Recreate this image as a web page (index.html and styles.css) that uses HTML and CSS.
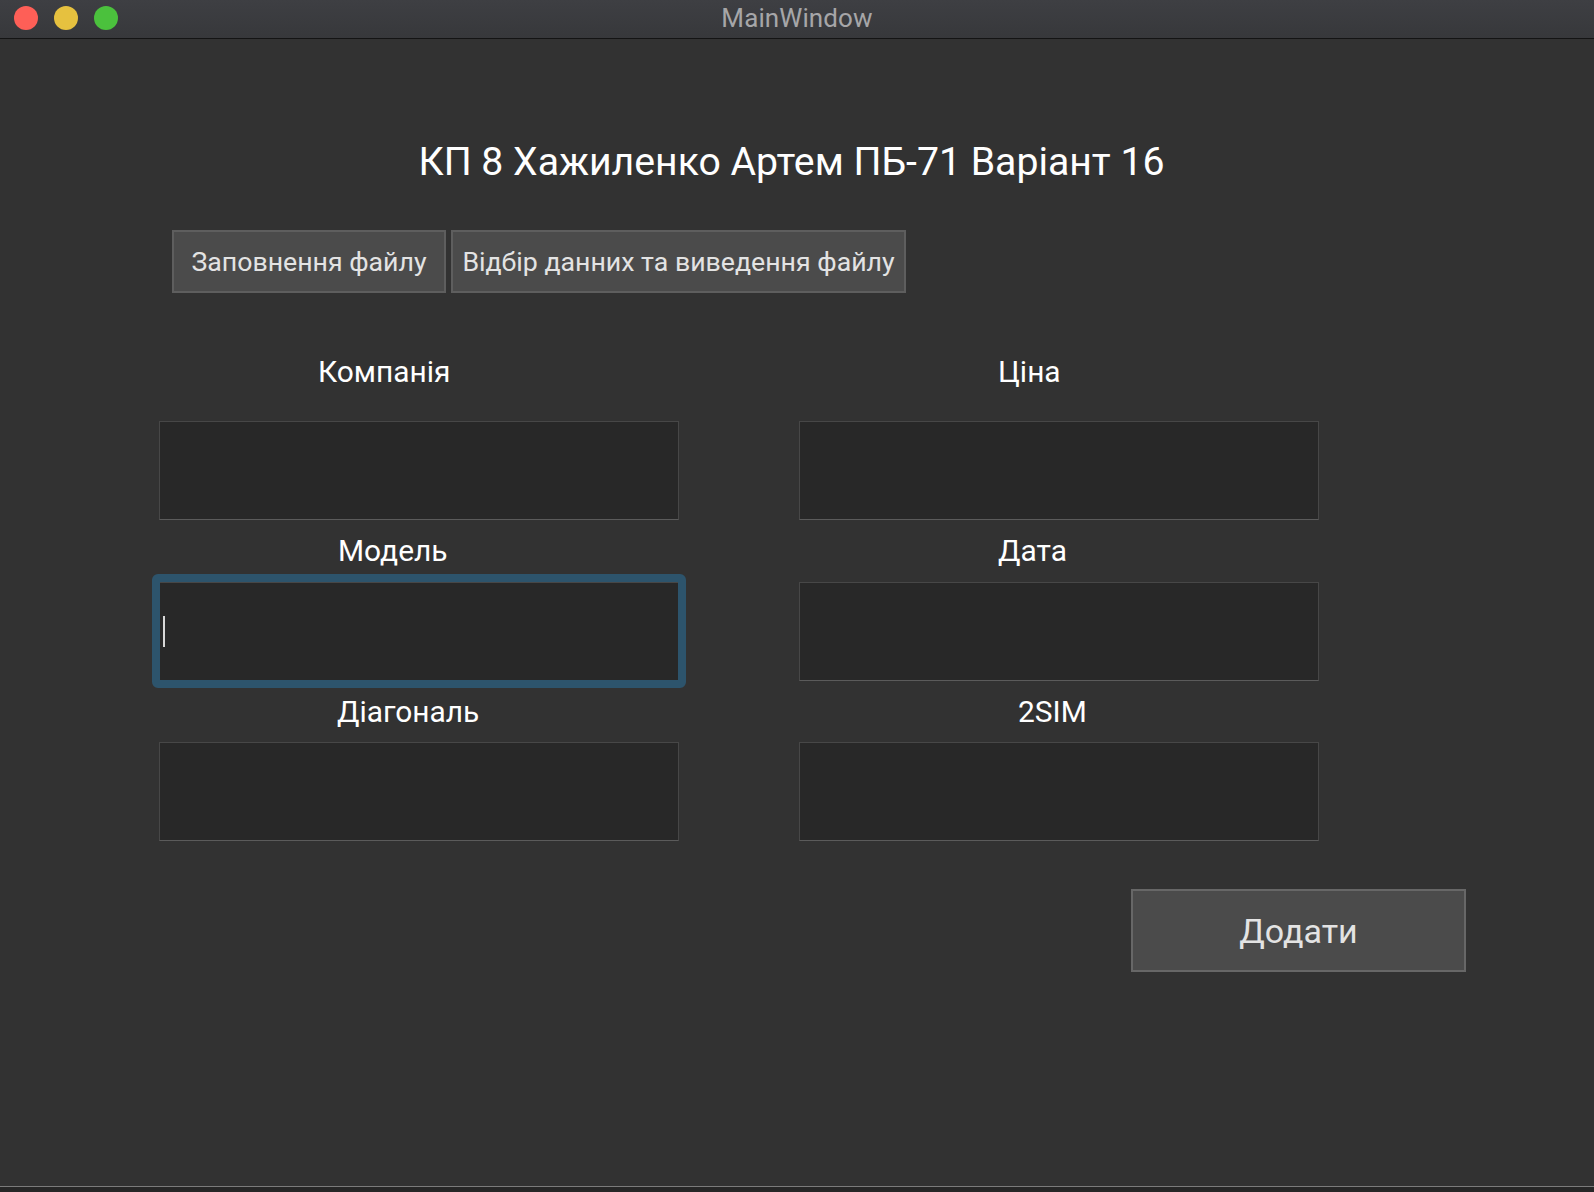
FILE: index.html
```html
<!DOCTYPE html>
<html lang="uk">
<head>
<meta charset="utf-8">
<title>MainWindow</title>
<link rel="stylesheet" href="styles.css">
</head>
<body>
<div class="window">
  <header class="titlebar">
    <div class="lights">
      <span class="light red"></span>
      <span class="light yellow"></span>
      <span class="light green"></span>
    </div>
    <div class="win-title">MainWindow</div>
    <div class="spacer"></div>
  </header>
  <main class="content">
    <h1 class="heading">КП 8 Хажиленко Артем ПБ-71 Варіант 16</h1>
    <div class="tabs">
      <button class="tab tab-fill">Заповнення файлу</button>
      <button class="tab tab-select">Відбір данних та виведення файлу</button>
    </div>
    <div class="form">
      <div class="col">
        <label class="lbl lbl-first lbl-company">Компанія</label>
        <div class="field"></div>
        <label class="lbl lbl-mid lbl-model">Модель</label>
        <div class="field focused"><span class="caret"></span></div>
        <label class="lbl lbl-last lbl-diag">Діагональ</label>
        <div class="field"></div>
      </div>
      <div class="col">
        <label class="lbl lbl-first lbl-price">Ціна</label>
        <div class="field"></div>
        <label class="lbl lbl-mid lbl-date">Дата</label>
        <div class="field"></div>
        <label class="lbl lbl-last lbl-sim">2SIM</label>
        <div class="field"></div>
      </div>
    </div>
    <div class="actions">
      <button class="add">Додати</button>
    </div>
  </main>
  <div class="bottom-edge"></div>
</div>
</body>
</html>
```

FILE: styles.css
```css
* { box-sizing: border-box; }

html, body {
  margin: 0;
  padding: 0;
  background: #323232;
}

body {
  font-family: Roboto, "Noto Sans", "Liberation Sans", sans-serif;
  color: #ffffff;
}

.window {
  width: 1594px;
  height: 1192px;
  display: flex;
  flex-direction: column;
  background: #323232;
}

/* ---------- title bar ---------- */
.titlebar {
  height: 39px;
  flex: 0 0 39px;
  display: grid;
  grid-template-columns: 1fr auto 1fr;
  align-items: center;
  background: linear-gradient(#3e3f43, #37383b);
  border-bottom: 1px solid #141414;
}

.lights {
  display: flex;
  gap: 16px;
  padding-left: 14px;
  padding-bottom: 3px;
}

.light {
  width: 24px;
  height: 24px;
  border-radius: 50%;
  display: block;
}
.red { background: #fe5f57; }
.yellow { background: #e6c13f; }
.green { background: #4bc13d; }

.win-title {
  font-size: 26px;
  color: #a6a6a8;
  letter-spacing: 0.1px;
  padding-bottom: 2px;
}

/* ---------- content ---------- */
.content {
  flex: 1;
  padding-top: 100px;
}

.heading {
  margin: 0;
  font-weight: 400;
  font-size: 39.2px;
  line-height: 46px;
  text-align: center;
  padding-right: 11px;
  color: #ffffff;
}

.tabs {
  display: flex;
  gap: 5px;
  margin-top: 45px;
  padding-left: 172px;
}

.tab {
  height: 63px;
  background: #4b4b4b;
  border: 2px solid #5e5e5e;
  color: #e3e3e3;
  font-family: inherit;
  font-size: 26.7px;
  padding: 0;
  margin: 0;
  white-space: nowrap;
}
.tab-fill { width: 274px; }
.tab-select { width: 455px; }

/* ---------- form ---------- */
.form {
  display: grid;
  grid-template-columns: 520px 520px;
  column-gap: 120px;
  padding-left: 159px;
  margin-top: 48px;
}

.col {
  display: flex;
  flex-direction: column;
}

.lbl {
  display: block;
  font-size: 29.9px;
  line-height: 62px;
  height: 62px;
  color: #ffffff;
  white-space: nowrap;
}
.lbl-first { margin-bottom: 18px; }
.lbl-last { height: 61px; line-height: 61px; }

.lbl-company { padding-left: 159px; }
.lbl-model { padding-left: 179px; }
.lbl-diag { padding-left: 178px; }
.lbl-price { padding-left: 199px; }
.lbl-date { padding-left: 199px; }
.lbl-sim { padding-left: 219px; }

.field {
  position: relative;
  height: 99px;
  background: #282828;
  border: 1px solid #474747;
  border-bottom-color: #5b5b5b;
  display: flex;
  align-items: center;
}

.field.focused::before {
  content: "";
  position: absolute;
  inset: -9px -8px -8px -8px;
  border: 8px solid #2d546c;
  border-radius: 6px;
  pointer-events: none;
}

.caret {
  display: block;
  width: 2px;
  height: 31px;
  margin-left: 3px;
  background: #d8d8d8;
}

/* ---------- actions ---------- */
.actions {
  display: flex;
  justify-content: flex-end;
  padding-right: 128px;
  margin-top: 48px;
}

.add {
  width: 335px;
  height: 83px;
  background: #4b4b4b;
  border: 2px solid #676767;
  color: #e3e3e3;
  font-family: inherit;
  font-size: 34px;
  padding: 0;
  margin: 0;
}

.bottom-edge {
  flex: 0 0 6px;
  height: 6px;
  background: #272727;
  border-top: 1px solid #7b7b7b;
}
```
